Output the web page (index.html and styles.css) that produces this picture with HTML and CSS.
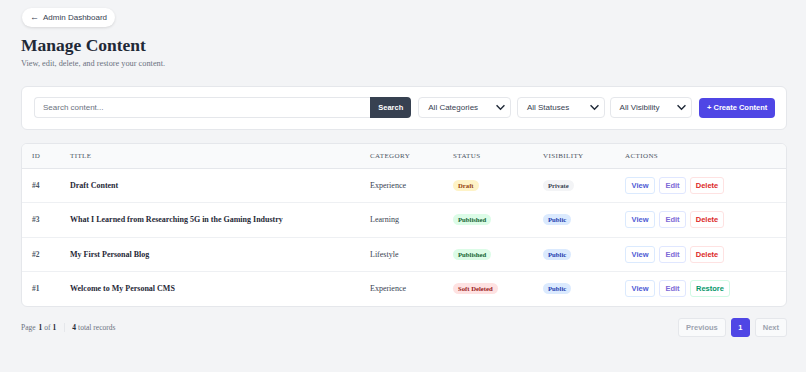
FILE: index.html
```html
<!DOCTYPE html>
<html lang="en">
<head>
  <meta charset="UTF-8">
  <meta name="viewport" content="width=device-width, initial-scale=1.0">
  <title>Manage Content</title>
  <link rel="stylesheet" href="styles.css">
</head>
<body>
  <main class="page">
    <a class="back-link" href="#"><span class="arrow">&larr;</span> Admin Dashboard</a>

    <header class="page-head">
      <h1>Manage Content</h1>
      <p>View, edit, delete, and restore your content.</p>
    </header>

    <section class="filters">
      <div class="search">
        <input type="text" placeholder="Search content...">
        <button class="search-btn">Search</button>
      </div>
      <div class="select sel-cat">All Categories <svg viewBox="0 0 12 8"><path d="M1.5 1.5 6 6l4.5-4.5"/></svg></div>
      <div class="select sel-status">All Statuses <svg viewBox="0 0 12 8"><path d="M1.5 1.5 6 6l4.5-4.5"/></svg></div>
      <div class="select sel-vis">All Visibility <svg viewBox="0 0 12 8"><path d="M1.5 1.5 6 6l4.5-4.5"/></svg></div>
      <button class="create-btn">+ Create Content</button>
    </section>

    <section class="table-card">
      <table>
        <colgroup>
          <col class="c-id"><col class="c-title"><col class="c-cat"><col class="c-status"><col class="c-vis"><col>
        </colgroup>
        <thead>
          <tr><th>ID</th><th>Title</th><th>Category</th><th>Status</th><th>Visibility</th><th>Actions</th></tr>
        </thead>
        <tbody>
          <tr>
            <td class="id">#4</td>
            <td class="title">Draft Content</td>
            <td>Experience</td>
            <td><span class="badge draft">Draft</span></td>
            <td><span class="badge private">Private</span></td>
            <td class="actions"><button class="act view">View</button><button class="act edit">Edit</button><button class="act delete">Delete</button></td>
          </tr>
          <tr>
            <td class="id">#3</td>
            <td class="title">What I Learned from Researching 5G in the Gaming Industry</td>
            <td>Learning</td>
            <td><span class="badge published">Published</span></td>
            <td><span class="badge public">Public</span></td>
            <td class="actions"><button class="act view">View</button><button class="act edit">Edit</button><button class="act delete">Delete</button></td>
          </tr>
          <tr>
            <td class="id">#2</td>
            <td class="title">My First Personal Blog</td>
            <td>Lifestyle</td>
            <td><span class="badge published">Published</span></td>
            <td><span class="badge public">Public</span></td>
            <td class="actions"><button class="act view">View</button><button class="act edit">Edit</button><button class="act delete">Delete</button></td>
          </tr>
          <tr>
            <td class="id">#1</td>
            <td class="title">Welcome to My Personal CMS</td>
            <td>Experience</td>
            <td><span class="badge deleted">Soft Deleted</span></td>
            <td><span class="badge public">Public</span></td>
            <td class="actions"><button class="act view">View</button><button class="act edit">Edit</button><button class="act restore">Restore</button></td>
          </tr>
        </tbody>
      </table>
    </section>

    <footer class="pager">
      <div class="pager-info">Page <b>1</b> of <b>1</b><span class="sep"></span><b>4</b> total records</div>
      <div class="pager-nav">
        <button class="pg" disabled>Previous</button>
        <button class="pg current">1</button>
        <button class="pg" disabled>Next</button>
      </div>
    </footer>
  </main>
</body>
</html>
```

FILE: styles.css
```css
*, *::before, *::after {
  box-sizing: border-box;
}

body {
  margin: 0;
  background: #f3f4f6;
  color: #1f2937;
  font-family: "Liberation Serif", "Times New Roman", serif;
}

.page {
  padding: 6px 19px 20px 21px;
}

button, input {
  font-family: "Liberation Sans", Arial, sans-serif;
}

/* back link */
.back-link {
  display: inline-flex;
  align-items: center;
  gap: 4px;
  height: 19px;
  padding: 0 8px 0 8px;
  margin-left: 1px;
  background: #fff;
  border-radius: 10px;
  box-shadow: 0 1px 3px rgba(0, 0, 0, 0.12);
  font-family: "Liberation Sans", Arial, sans-serif;
  font-size: 8px;
  color: #374151;
  text-decoration: none;
}

.back-link .arrow {
  font-size: 9px;
}

.page-head h1 {
  margin: 7px 0 0 0;
  font-size: 17.5px;
  line-height: 22px;
  font-weight: bold;
}

.page-head p {
  margin: 3px 0 0 0;
  font-size: 8.3px;
  color: #6b7280;
}

/* filters */
.filters {
  display: flex;
  align-items: center;
  margin-top: 18px;
  height: 44px;
  padding: 0 11px 0 12px;
  background: #fff;
  border: 1px solid #e5e7eb;
  border-radius: 6px;
}

.search {
  display: flex;
  width: 379px;
  height: 21px;
}

.search input {
  flex: 1;
  min-width: 0;
  border: 1px solid #e5e7eb;
  border-right: none;
  border-radius: 4px 0 0 4px;
  padding: 0 8px;
  font-size: 8px;
  outline: none;
}

.search input::placeholder {
  color: #6b7280;
}

.search-btn {
  width: 41px;
  border: none;
  border-radius: 0 4px 4px 0;
  background: #374151;
  color: #fff;
  font-size: 7.5px;
  font-weight: bold;
}

.select {
  display: flex;
  align-items: center;
  justify-content: space-between;
  height: 21px;
  margin-left: 7px;
  padding: 0 4px 0 9px;
  border: 1px solid #e5e7eb;
  border-radius: 4px;
  background: #fff;
  font-family: "Liberation Sans", Arial, sans-serif;
  font-size: 8px;
  color: #374151;
}

.select svg {
  width: 11px;
  height: 7px;
  fill: none;
  stroke: #1f2937;
  stroke-width: 1.6;
}

.sel-cat { width: 93px; }
.sel-status { width: 88px; margin-left: 6px; }
.sel-vis { width: 83px; margin-left: 5px; }

.create-btn {
  margin-left: 7px;
  width: 76px;
  height: 20px;
  border: none;
  border-radius: 4px;
  background: #4f46e5;
  color: #fff;
  font-size: 7.5px;
  font-weight: bold;
}

/* table */
.table-card {
  margin-top: 13px;
  background: #fff;
  border: 1px solid #e5e7eb;
  border-radius: 6px;
  overflow: hidden;
}

table {
  width: 100%;
  border-collapse: collapse;
  table-layout: fixed;
}

.c-id { width: 48px; }
.c-title { width: 300px; }
.c-cat { width: 83px; }
.c-status { width: 90px; }
.c-vis { width: 82px; }

th, td {
  padding: 0;
}

th:first-child, td:first-child {
  padding-left: 10px;
}

th {
  height: 25px;
  background: #f9fafb;
  border-bottom: 1px solid #e5e7eb;
  text-align: left;
  font-size: 7px;
  font-weight: normal;
  letter-spacing: 0.4px;
  text-transform: uppercase;
  color: #4b5563;
}

td {
  height: 34.25px;
  border-bottom: 1px solid #eef0f3;
  font-size: 8px;
  color: #374151;
  white-space: nowrap;
}

tbody tr:last-child td {
  border-bottom: none;
}

td.id {
  font-weight: bold;
  font-size: 7.5px;
  color: #4b5563;
}

td.title {
  font-weight: bold;
  color: #1f2937;
}

.badge {
  display: inline-block;
  padding: 2px 5px;
  border-radius: 7px;
  font-size: 6.7px;
  font-weight: bold;
}

.badge.draft { background: #fef3c7; color: #92400e; }
.badge.published { background: #dcfce7; color: #166534; }
.badge.private { background: #f3f4f6; color: #374151; }
.badge.public { background: #dbeafe; color: #1e40af; }
.badge.deleted { background: #fee2e2; color: #991b1b; }

.actions {
  font-size: 0;
}

.act {
  height: 17px;
  margin-right: 4px;
  padding: 0;
  background: #fff;
  border: 1px solid;
  border-radius: 3px;
  font-size: 7.5px;
  font-weight: bold;
}

.act.view { width: 30px; border-color: #dbeafe; color: #4f5bd5; }
.act.edit { width: 27px; border-color: #e0e7ff; color: #7c6ad6; }
.act.delete { width: 34px; border-color: #fee2e2; color: #dc2626; }
.act.restore { width: 40px; border-color: #d1fae5; color: #059669; }

/* pager */
.pager {
  display: flex;
  align-items: center;
  justify-content: space-between;
  margin-top: 11px;
}

.pager-info {
  display: flex;
  align-items: center;
  font-size: 7.5px;
  color: #6b7280;
}

.pager-info b {
  color: #1f2937;
  margin: 0 2px;
}

.pager-info b:first-child {
  margin-left: 3px;
}

.sep {
  display: inline-block;
  width: 1px;
  height: 9px;
  background: #e5e7eb;
  margin: 0 5px 0 6px;
}

.pager-nav {
  display: flex;
  gap: 5px;
}

.pg {
  height: 19px;
  padding: 0 7px;
  border: 1px solid #e5e7eb;
  border-radius: 3px;
  background: #f9fafb;
  color: #9ca3af;
  font-size: 7.5px;
  font-weight: bold;
}

.pg.current {
  width: 19px;
  padding: 0;
  background: #4f46e5;
  border-color: #4f46e5;
  color: #fff;
}
```
